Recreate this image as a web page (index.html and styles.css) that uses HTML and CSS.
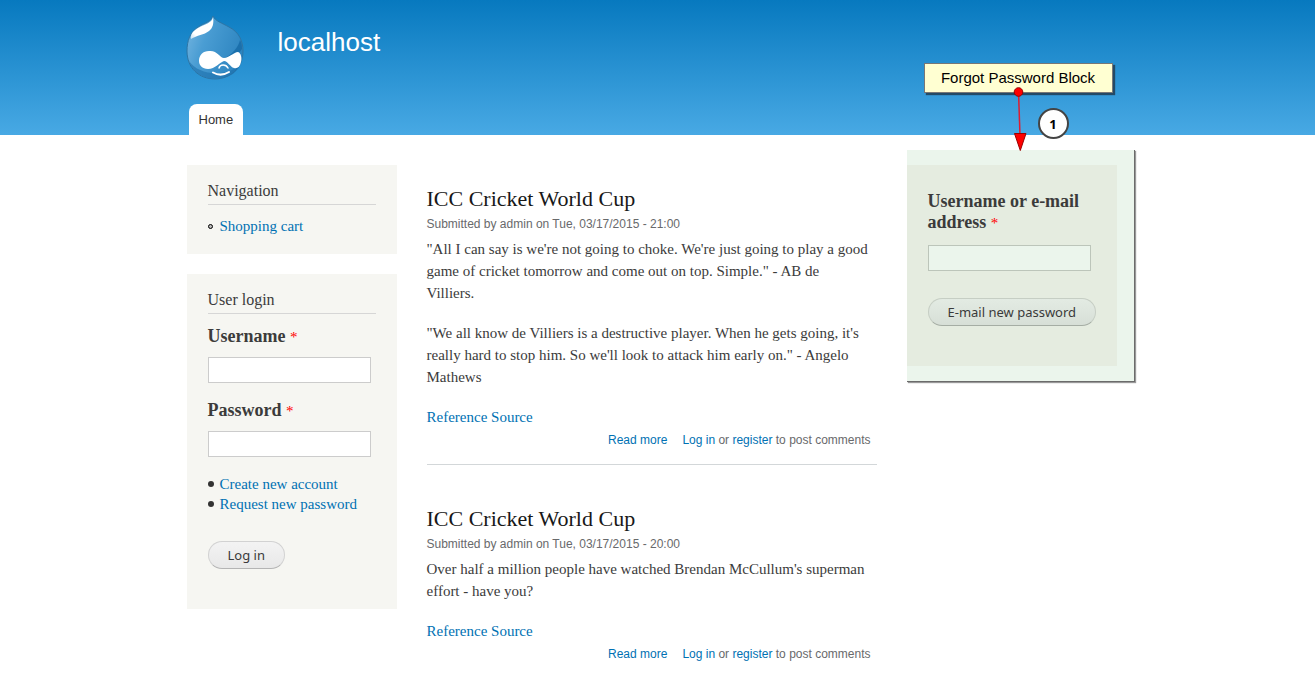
FILE: index.html
```html
<!DOCTYPE html>
<html lang="en">
<head>
<meta charset="utf-8">
<meta name="viewport" content="width=device-width, initial-scale=1">
<title>localhost</title>
<link rel="stylesheet" href="styles.css">
</head>
<body>
<header class="header">
  <div class="wrap header-inner">
    <div class="brand">
      <a href="#" aria-label="Home page">
        <svg class="logo" viewBox="0 0 58 66" aria-hidden="true">
          <defs>
            <linearGradient id="drop" x1="0" y1="0.3" x2="1" y2="0.7">
              <stop offset="0" stop-color="#6db1de"/>
              <stop offset="0.3" stop-color="#4a9dd3"/>
              <stop offset="1" stop-color="#2a82be"/>
            </linearGradient>
            <linearGradient id="shine" x1="1" y1="0" x2="0" y2="1">
              <stop offset="0" stop-color="#fff"/>
              <stop offset="0.8" stop-color="#fff"/>
              <stop offset="1" stop-color="#fff" stop-opacity="0.6"/>
            </linearGradient>
          </defs>
          <path d="M27 1C29 6 36 8 43 12C53 17 57 26 57 36C57 53 44 64 29 64C13 64 1 53 1 36C1 26 4 17 12 12C18 8 25 7 27 1Z" fill="url(#drop)" stroke="#2d75a5" stroke-width="1"/>
          <path d="M56 34C53 39 47 43 39 43C46 39 52 33 54 25Q56 28 56 34Z" fill="#176aa6" opacity="0.8"/>
          <path d="M3 46C9 55 21 59 34 58C45 57 52 53 55.500 46C53 57 44 63.500 29 63.500C15 63.500 6 56 3 46Z" fill="#1c70ac" opacity="0.6"/>
          <path d="M27 2C28 8 27 13 23 16C18 20 11 20 5 24C4 19 8 15 13 12.500C19 9 26 8 27 2Z" fill="url(#shine)"/>
          <path d="M23 36C31 35 34 43 38 43C43 43 48 37 52 37C55 38 56 43 55 47C54 52 51 54 48 53C44 52 42 46 38 46C34 47 29 54 22 54C16 54 13 50 13 46C13 40 17 36 23 36Z" fill="#fff"/>
          <path d="M33 53C34 49 40 49 42 53" fill="none" stroke="#fff" stroke-width="1.5" stroke-linecap="round"/>
          <path d="M27 57.500Q35 62 43 57" fill="none" stroke="#fff" stroke-width="2" stroke-linecap="round"/>
        </svg>
      </a>
      <a class="site-name" href="#">localhost</a>
    </div>
    <nav class="tabs"><a class="tab" href="#">Home</a></nav>
  </div>
</header>

<div class="wrap columns">
  <div class="sidebar">
    <section class="block nav-block">
      <h2 class="block-title">Navigation</h2>
      <ul class="links hollow"><li><a href="#">Shopping cart</a></li></ul>
    </section>
    <section class="block login-block">
      <h2 class="block-title">User login</h2>
      <form class="form">
        <div class="field">
          <label for="user">Username <span class="required">*</span></label>
          <input id="user" type="text">
        </div>
        <div class="field">
          <label for="pass">Password <span class="required">*</span></label>
          <input id="pass" type="password">
        </div>
        <ul class="links">
          <li><a href="#">Create new account</a></li>
          <li><a href="#">Request new password</a></li>
        </ul>
        <button class="button" type="button">Log in</button>
      </form>
    </section>
  </div>

  <main class="content">
    <article class="post">
      <h2><a href="#">ICC Cricket World Cup</a></h2>
      <div class="meta">Submitted by admin on Tue, 03/17/2015 - 21:00</div>
      <p>"All I can say is we're not going to choke. We're just going to play a good game of cricket tomorrow and come out on top. Simple." - AB de Villiers.</p>
      <p>"We all know de Villiers is a destructive player. When he gets going, it's really hard to stop him. So we'll look to attack him early on." - Angelo Mathews</p>
      <p><a href="#">Reference Source</a></p>
      <footer class="post-links"><a href="#">Read more</a><span><a href="#">Log in</a> or <a href="#">register</a> to post comments</span></footer>
    </article>
    <article class="post">
      <h2><a href="#">ICC Cricket World Cup</a></h2>
      <div class="meta">Submitted by admin on Tue, 03/17/2015 - 20:00</div>
      <p>Over half a million people have watched Brendan McCullum's superman effort - have you?</p>
      <p><a href="#">Reference Source</a></p>
      <footer class="post-links"><a href="#">Read more</a><span><a href="#">Log in</a> or <a href="#">register</a> to post comments</span></footer>
    </article>
  </main>

  <aside class="aside">
    <div class="highlight">
      <form class="reset">
        <label for="mail">Username or e-mail address <span class="required">*</span></label>
        <input id="mail" type="text">
        <button class="button" type="button">E-mail new password</button>
      </form>
    </div>
    <div class="note">Forgot Password Block</div>
    <svg class="arrow" viewBox="0 0 16 66" aria-hidden="true">
      <path d="M6.500 5L8 50" stroke="#e01c30" stroke-width="1.5"/>
      <circle cx="6.500" cy="6" r="4.300" fill="#f00" stroke="#900"/>
      <path d="M2.500 47.500H14L8.300 64.500Z" fill="#f00" stroke="#900"/>
    </svg>
    <div class="marker">1</div>
  </aside>
</div>
</body>
</html>
```

FILE: styles.css
```css
*, *::before { box-sizing: border-box; }

body {
  margin: 0;
  background: #fff;
  color: #3b3b3b;
  font-family: "Liberation Serif", serif;
  font-size: 15px;
  line-height: 22px;
}

a { color: #0071b3; text-decoration: none; }
h2, p, ul { margin: 0; padding: 0; font-weight: normal; }

.wrap {
  max-width: 960px;
  margin: 0 auto;
  padding: 0 21px 0 9px;
}

.header { background: linear-gradient(#0779bf, #48a9e4); }
.header-inner {
  display: flex;
  flex-direction: column;
  font-family: "Liberation Sans", sans-serif;
}
.brand { display: flex; gap: 34px; height: 104px; padding-top: 15px; }
.logo { display: block; width: 58px; height: 66px; margin-left: -1px; }
.site-name { margin-top: 12px; color: #fff; font-size: 26px; line-height: 30px; }
.tabs { display: flex; padding-left: 2px; }
.tab {
  padding: 5px 10px 4px;
  border-radius: 8px 8px 0 0;
  background: #fff;
  color: #333;
  font-size: 13px;
}

.columns {
  display: grid;
  grid-template-columns: 210px minmax(0, 1fr) 210px;
  align-items: start;
  gap: 30px;
}

.sidebar { display: grid; gap: 20px; padding-top: 30px; }
.block { padding: 16px 21px; background: #f6f6f2; }
.block-title {
  margin-bottom: 11px;
  padding-bottom: 3px;
  border-bottom: 1px solid #d6d6d6;
  font-size: 16px;
  line-height: 20px;
}
.nav-block { padding-bottom: 18px; }
.login-block { padding-bottom: 40px; }
.login-block .block-title { margin-bottom: 12px; }
.links { list-style: none; line-height: 20px; }
.links li { display: flex; align-items: center; gap: 6px; }
.links li::before {
  content: "";
  width: 6px;
  height: 6px;
  border-radius: 50%;
  background: #333;
}
.hollow li::before { width: 5px; height: 5px; margin-right: 1px; border: 1px solid #000; background: #bbb; }
.form { display: grid; gap: 17px; justify-items: start; }
.field { display: grid; gap: 11px; }
label { font-size: 18px; font-weight: bold; line-height: 20px; }
.required { color: #f00; font-size: 15px; font-weight: normal; line-height: 16px; }
input {
  width: 163px;
  height: 26px;
  padding: 2px 4px;
  border: 1px solid #ccc;
  border-radius: 0;
  background: #fff;
}
.button {
  height: 28px;
  padding: 0 19px;
  border: 1px solid #d2d2d2;
  border-bottom-color: #b4b4b4;
  border-radius: 14px;
  background: linear-gradient(#f3f3f3, #e8e8e8);
  color: #3a3a3a;
  font-family: "Noto Sans", "DejaVu Sans", sans-serif;
  font-size: 13px;
  white-space: nowrap;
}
.form .button { margin-top: 10px; }

.content { padding-top: 51px; }
.post + .post { margin-top: 41px; }
.post:first-child { padding-bottom: 15px; border-bottom: 1px solid #d3d7d9; }
.post h2 { font-size: 22px; line-height: 26px; }
.post h2 a { color: #181818; }
.meta {
  margin: 3px 0 5px;
  color: #68696b;
  font-family: "Liberation Sans", sans-serif;
  font-size: 12px;
  line-height: 18px;
}
.post p { padding-right: 7px; }
.post p + p { margin-top: 18px; }
.post-links {
  display: flex;
  justify-content: flex-end;
  gap: 15px;
  margin-top: 3px;
  padding-right: 6px;
  color: #68696b;
  font-family: "Liberation Sans", sans-serif;
  font-size: 12px;
  line-height: 18px;
}

.aside {
  position: relative;
  width: 228px;
  margin-top: 15px;
  padding: 15px 17px 15px 0;
  border: solid #6b6b6b;
  border-width: 0 1px 1px 0;
  background: #ebf5ec;
  box-shadow: 1px 1px 1px #999;
}
.highlight { padding: 26px 21px 40px; background: #e5ece0; }
.reset { display: grid; justify-items: start; }
.reset label { line-height: 21px; }
.reset input { margin: 12px 0 27px; border-color: #bcc5ba; background: #ebf5ec; }
.reset .button {
  border-color: #c6cec4;
  border-bottom-color: #a5ada4;
  background: linear-gradient(#e3ebe3, #d7dfd7);
}
.note {
  position: absolute;
  top: -87px;
  left: 17px;
  width: 189px;
  padding: 3px 0;
  border: 1px solid #777;
  background: #ffffd2;
  box-shadow: 2px 2px 1px #234a66;
  color: #000;
  font: 15px/22px "Liberation Sans", sans-serif;
  text-align: center;
}
.arrow { position: absolute; top: -64px; left: 105px; width: 16px; height: 66px; }
.marker {
  position: absolute;
  top: -42px;
  left: 131px;
  width: 31px;
  height: 31px;
  border: 2px solid #444;
  border-radius: 50%;
  background: #fff;
  color: #000;
  font: bold 13px/28px "Noto Sans", sans-serif;
  text-align: center;
}
```
